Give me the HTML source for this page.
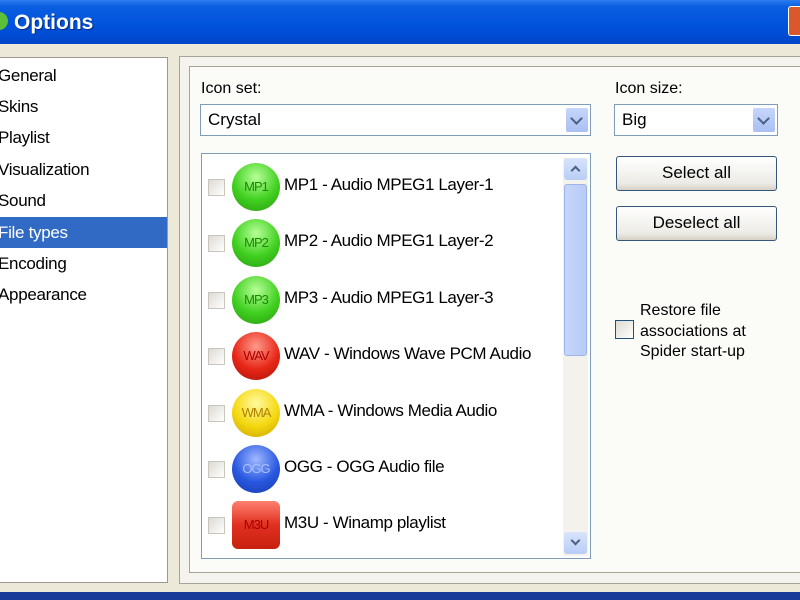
<!DOCTYPE html>
<html><head><style>
*{margin:0;padding:0;box-sizing:border-box}
body{width:800px;height:600px;overflow:hidden;background:#ece9d8;font-family:"Liberation Sans",sans-serif;position:relative;color:#000}
.abs{position:absolute}
.title{left:0;top:0;width:800px;height:44px;background:linear-gradient(#2d7cf0 0%,#0a5ee0 15%,#0052dc 60%,#0046c8 100%);}
.title span{position:absolute;left:14px;top:11px;color:#fff;font-weight:bold;font-size:21px;text-shadow:1px 1px 1px #002a80}
.nav{left:-4px;top:57px;width:172px;height:526px;background:#fff;border:1px solid #9c9a8c}
.nav div{position:absolute;left:0;width:170px;height:31px;font-size:17px;line-height:31px;padding-left:1px;letter-spacing:-0.3px}
.sel{background:#316ac5;color:#fff}
.outer{left:179px;top:56px;width:630px;height:528px;border:1px solid #a6a496;background:#f4f3ee}
.inner{left:189px;top:66px;width:620px;height:507px;border:1px solid #a6a496;background:#fbfbf8}
.lbl{font-size:16px}
.combo{height:32px;border:1px solid #7f9db9;background:#fff;font-size:17px;line-height:30px;padding-left:7px}
.dd{position:absolute;right:2px;top:3px;width:22px;height:24px;background:linear-gradient(#c6d6fb,#a9c0f2);border-radius:2px}
.dd:after{content:"";position:absolute;left:6px;top:6px;width:7px;height:7px;border-right:2.5px solid #4d6185;border-bottom:2.5px solid #4d6185;transform:rotate(45deg)}
.list{left:201px;top:153px;width:390px;height:406px;border:1px solid #7f9db9;background:#fff;overflow:hidden}
.row{position:absolute;left:0;height:50px;width:360px}
.cb{position:absolute;left:6px;top:17px;width:17px;height:17px;border:1px solid #c8c6bc;background:linear-gradient(135deg,#dcdad2,#fff)}
.ic{position:absolute;left:30px;top:1px;width:48px;height:48px;border-radius:50%;font-size:13px;line-height:48px;text-align:center;letter-spacing:-1px}
.t{position:absolute;left:82px;top:13px;font-size:17px;white-space:nowrap;letter-spacing:-0.4px}
.sb{left:361px;top:4px;width:25px;height:398px;background:#f3f2ec}
.btn{width:161px;height:35px;border:1px solid #36577c;border-radius:3px;background:linear-gradient(#fff,#ecebe6 80%,#d6d0c5);font-size:17px;text-align:center;line-height:32px}
.ar{position:absolute;left:8px;width:7px;height:7px;border-left:2.5px solid #4d6185;border-top:2.5px solid #4d6185}
</style></head><body>
<div class="abs title"><span>Options</span><div class="abs" style="left:-10px;top:12px;width:18px;height:18px;border-radius:50%;background:#5cc038"></div>
<div class="abs" style="left:788px;top:6px;width:22px;height:30px;background:#d9582e;border:1px solid #fff;border-radius:3px"></div></div>
<div class="abs nav">
<div style="top:2px">General</div><div style="top:33px">Skins</div><div style="top:64px">Playlist</div><div style="top:96px">Visualization</div><div style="top:127px">Sound</div><div class="sel" style="top:159px">File types</div><div style="top:190px">Encoding</div><div style="top:221px">Appearance</div>
</div>
<div class="abs outer"></div>
<div class="abs inner"></div>
<div class="abs lbl" style="left:201px;top:80px">Icon set:</div>
<div class="abs combo" style="left:200px;top:104px;width:391px">Crystal<div class="dd"></div></div>
<div class="abs lbl" style="left:615px;top:80px">Icon size:</div>
<div class="abs combo" style="left:614px;top:104px;width:164px">Big<div class="dd"></div></div>
<div class="abs list">
<div class="row" style="top:8px"><div class="cb"></div><div class="ic" style="background:radial-gradient(circle at 50% 30%,#b8ff98,#40d020 55%,#2a9a10);color:#1a8a00">MP1</div><div class="t">MP1 - Audio MPEG1 Layer-1</div></div>
<div class="row" style="top:64px"><div class="cb"></div><div class="ic" style="background:radial-gradient(circle at 50% 30%,#b8ff98,#40d020 55%,#2a9a10);color:#1a8a00">MP2</div><div class="t">MP2 - Audio MPEG1 Layer-2</div></div>
<div class="row" style="top:121px"><div class="cb"></div><div class="ic" style="background:radial-gradient(circle at 50% 30%,#b8ff98,#40d020 55%,#2a9a10);color:#1a8a00">MP3</div><div class="t">MP3 - Audio MPEG1 Layer-3</div></div>
<div class="row" style="top:177px"><div class="cb"></div><div class="ic" style="background:radial-gradient(circle at 50% 30%,#ff9a8a,#e82818 55%,#a81008);color:#a00">WAV</div><div class="t">WAV - Windows Wave PCM Audio</div></div>
<div class="row" style="top:234px"><div class="cb"></div><div class="ic" style="background:radial-gradient(circle at 50% 30%,#fffaa0,#f4d810 55%,#c8a000);color:#b08000">WMA</div><div class="t">WMA - Windows Media Audio</div></div>
<div class="row" style="top:290px"><div class="cb"></div><div class="ic" style="background:radial-gradient(circle at 50% 30%,#a0b8ff,#2858e0 55%,#1838a8);color:#a8c0ff">OGG</div><div class="t">OGG - OGG Audio file</div></div>
<div class="row" style="top:346px"><div class="cb"></div><div class="ic" style="border-radius:6px;background:linear-gradient(#ff8070,#e03020 50%,#c82010);color:#a00">M3U</div><div class="t">M3U - Winamp playlist</div></div>
<div class="abs sb">
<div class="abs" style="left:1px;top:0;width:23px;height:22px;background:linear-gradient(#d8e4fc,#b8cdf6);border-radius:3px"><div class="ar" style="top:9px;transform:rotate(45deg)"></div></div>
<div class="abs" style="left:1px;top:26px;width:23px;height:172px;background:linear-gradient(90deg,#c6d5fa,#b7cbf6);border:1px solid #9eb5ea;border-radius:3px"></div>
<div class="abs" style="left:1px;top:374px;width:23px;height:22px;background:linear-gradient(#d8e4fc,#b8cdf6);border-radius:3px"><div class="ar" style="top:5px;transform:rotate(225deg)"></div></div>
</div>
</div>
<div class="abs btn" style="left:616px;top:156px">Select all</div>
<div class="abs btn" style="left:616px;top:206px">Deselect all</div>
<div class="abs" style="left:615px;top:320px;width:19px;height:19px;border:1px solid #1c5180;background:linear-gradient(135deg,#dcdad2,#fff)"></div>
<div class="abs" style="left:640px;top:301px;font-size:16px;line-height:20.5px">Restore file<br>associations at<br>Spider start-up</div>
<div class="abs" style="left:0;top:592px;width:800px;height:8px;background:#1a3a9a"></div>
</body></html>
